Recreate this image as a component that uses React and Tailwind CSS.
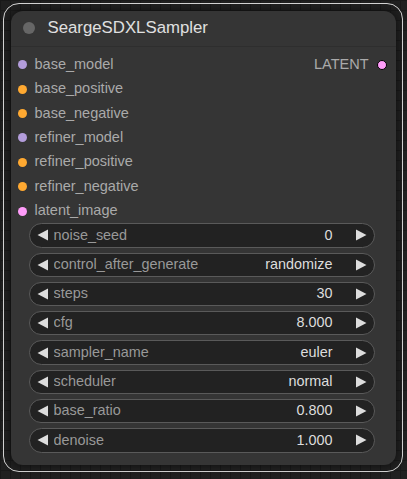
import React from 'react';

const inputs = [
  { name: 'base_model', color: 'bg-[#b39ddb]' },
  { name: 'base_positive', color: 'bg-[#ffa931]' },
  { name: 'base_negative', color: 'bg-[#ffa931]' },
  { name: 'refiner_model', color: 'bg-[#b39ddb]' },
  { name: 'refiner_positive', color: 'bg-[#ffa931]' },
  { name: 'refiner_negative', color: 'bg-[#ffa931]' },
  { name: 'latent_image', color: 'bg-[#ff9cf9]' },
];

const widgets = [
  { name: 'noise_seed', value: '0' },
  { name: 'control_after_generate', value: 'randomize' },
  { name: 'steps', value: '30' },
  { name: 'cfg', value: '8.000' },
  { name: 'sampler_name', value: 'euler' },
  { name: 'scheduler', value: 'normal' },
  { name: 'base_ratio', value: '0.800' },
  { name: 'denoise', value: '1.000' },
];

const Arrow = ({ dir }) => (
  <svg width="12" height="12" viewBox="0 0 12 12" className="shrink-0">
    {dir === 'left' ? (
      <polygon points="11,0.5 11,11.5 0.5,6" fill="#dddddd" />
    ) : (
      <polygon points="1,0.5 1,11.5 11.5,6" fill="#dddddd" />
    )}
  </svg>
);

const Widget = ({ name, value }) => (
  <div className="flex items-center h-[24.4px] rounded-full border border-[#5a5a5a] bg-[#222222] pl-[7px] pr-[7px]">
    <Arrow dir="left" />
    <span className="ml-[5px] text-[#999999] flex-1 truncate">{name}</span>
    <span className="text-[#dddddd] mr-[22px]">{value}</span>
    <Arrow dir="right" />
  </div>
);

export default function App() {
  return (
    <div
      className="w-[407px] h-[479px] overflow-hidden bg-[#202020] bg-[linear-gradient(#191919_1px,transparent_1px),linear-gradient(90deg,#191919_1px,transparent_1px)] bg-[size:10px_10px] pt-[3px] pl-[3px] pr-[4px]"
      style={{ fontFamily: '"Liberation Sans", Arial, sans-serif' }}
    >
      {/* selection outline */}
      <div className="rounded-[16px] border-[1.5px] border-[#d6d6d6] p-[6.5px]">
        {/* node body */}
        <div className="h-[454px] rounded-[12px] bg-[#353535] shadow-[0_0_8px_rgba(0,0,0,0.6)]">
          <div className="flex items-center h-[36px] border-b border-[#2e2e2e] pl-[12px]">
            <div className="w-[12px] h-[12px] rounded-full bg-[#666666]" />
            <span className="ml-[13px] text-[16.8px] text-[#e0e0e0]">SeargeSDXLSampler</span>
          </div>
          <div className="pt-[6px]">
            {inputs.map((inp, i) => (
              <div key={inp.name} className="flex items-center h-[24.4px] text-[14.5px]">
                <div className="w-[24px] flex justify-center">
                  <div className={`w-[9px] h-[9px] rounded-full ${inp.color}`} />
                </div>
                <span className="text-[#aaaaaa]">{inp.name}</span>
                {i === 0 && (
                  <div className="ml-auto flex items-center pr-[9px]">
                    <span className="text-[#aaaaaa]">LATENT</span>
                    <div className="ml-[8px] w-[10px] h-[10px] rounded-full bg-[#ff9cf9] border border-black" />
                  </div>
                )}
              </div>
            ))}
          </div>
          <div className="flex flex-col gap-[4.9px] pl-[18px] pr-[21px] text-[14.4px]">
            {widgets.map((w) => (
              <Widget key={w.name} {...w} />
            ))}
          </div>
        </div>
      </div>
    </div>
  );
}
